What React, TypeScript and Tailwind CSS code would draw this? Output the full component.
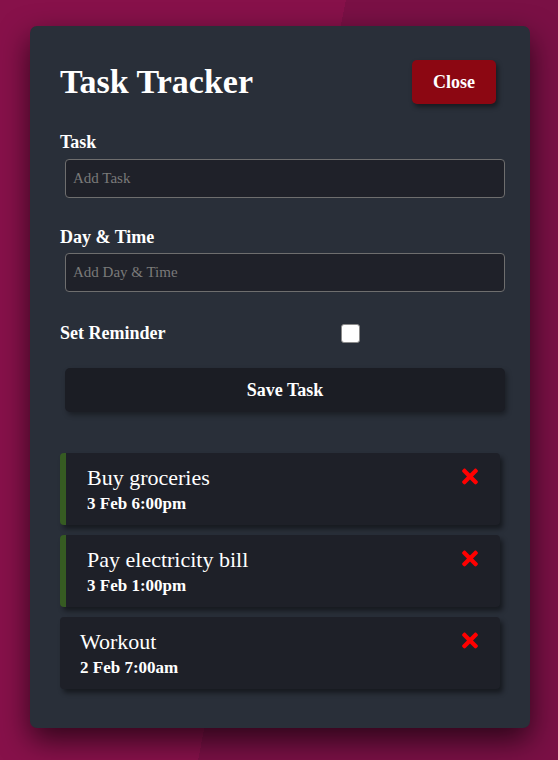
import React from 'react';
import { FaTimes } from 'react-icons/fa';

type Task = { id: number; text: string; day: string; reminder: boolean };

const tasks: Task[] = [
  { id: 1, text: 'Buy groceries', day: '3 Feb 6:00pm', reminder: true },
  { id: 2, text: 'Pay electricity bill', day: '3 Feb 1:00pm', reminder: true },
  { id: 3, text: 'Workout', day: '2 Feb 7:00am', reminder: false },
];

const font = "font-['Liberation_Serif','Times_New_Roman',serif]";

const App = () => {
  return (
    <div
      className={`min-h-screen w-full bg-[linear-gradient(101deg,#87114a_49%,#7a1045_49%)] pt-[26px] pb-[32px] ${font}`}
    >
      <div className="ml-[30px] w-[500px] rounded-[7px] bg-[#292f39] px-[30px] pt-[34px] pb-[39px] text-white shadow-[0_12px_30px_rgba(0,0,0,0.65)]">
        {/* Header */}
        <header className="flex items-center justify-between">
          <h1 className="text-[34px] leading-none font-bold">Task Tracker</h1>
          <button className="mr-[4px] h-[44px] w-[84px] rounded-[5px] bg-[#8c0712] text-[18px] font-bold text-white shadow-[2px_3px_5px_rgba(0,0,0,0.45)]">
            Close
          </button>
        </header>

        {/* Form */}
        <form className="mt-[26px]">
          <div>
            <label className="block text-[18px] leading-[24px] font-bold">Task</label>
            <input
              type="text"
              placeholder="Add Task"
              className={`mt-[5px] ml-[5px] block h-[39px] w-full rounded-[4px] border border-[#6e6e6e] bg-[#1f2129] px-[7px] text-[15px] text-white outline-none placeholder:text-[#7a7a7a] ${font}`}
            />
          </div>

          <div className="mt-[27px]">
            <label className="block text-[18px] leading-[24px] font-bold">Day &amp; Time</label>
            <input
              type="text"
              placeholder="Add Day & Time"
              className={`mt-[4px] ml-[5px] block h-[39px] w-full rounded-[4px] border border-[#6e6e6e] bg-[#1f2129] px-[7px] text-[15px] text-white outline-none placeholder:text-[#7a7a7a] ${font}`}
            />
          </div>

          <div className="mt-[29px] flex h-[24px] items-center">
            <label className="flex-1 text-[18px] font-bold">Set Reminder</label>
            <div className="flex flex-[2] justify-center pr-[4px]">
              <span className="block h-[19px] w-[19px] rounded-[3px] border border-[#8a8a8a] bg-white" />
            </div>
          </div>

          <button
            type="button"
            className={`mt-[23px] ml-[5px] block h-[44px] w-full rounded-[5px] bg-[#1b1d24] text-[18px] font-bold text-white shadow-[2px_3px_5px_rgba(0,0,0,0.35)] ${font}`}
          >
            Save Task
          </button>
        </form>

        {/* Tasks */}
        <div className="mt-[41px] flex flex-col gap-[10px]">
          {tasks.map((task) => (
            <div
              key={task.id}
              className={`flex h-[72px] items-start justify-between rounded-[4px] bg-[#1e2028] pt-[10px] pr-[22px] shadow-[3px_4px_5px_rgba(0,0,0,0.45)] ${
                task.reminder ? 'border-l-[6px] border-[#365b22] pl-[21px]' : 'pl-[20px]'
              }`}
            >
              <div>
                <h3 className="text-[22px] leading-[29px]">{task.text}</h3>
                <p className="text-[17px] leading-[24px] font-bold">{task.day}</p>
              </div>
              <FaTimes className="mt-[2px] h-[23px] w-[16px] text-[#ff0000]" />
            </div>
          ))}
        </div>
      </div>
    </div>
  );
};

export default App;
